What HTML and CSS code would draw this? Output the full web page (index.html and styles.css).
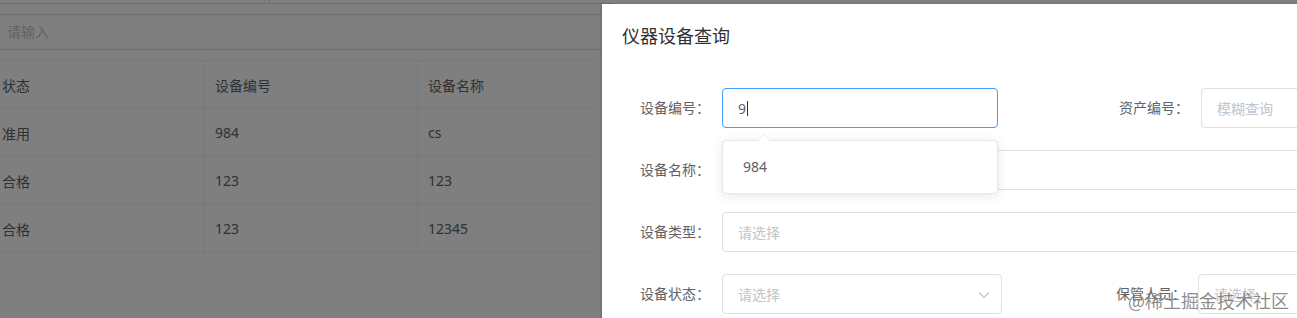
FILE: index.html
```html
<!DOCTYPE html>
<html lang="zh-CN">

<head>
    <meta charset="UTF-8">
    <meta name="viewport" content="width=device-width, initial-scale=1.0">
    <title>仪器设备查询</title>
    <link rel="stylesheet" href="styles.css">
</head>

<body>
    <!--底层页面-->
    <div class="page">
        <div class="topbar"><span class="topbar-tab"></span></div>
        <div class="search">
            <div class="search-input">请输入</div>
        </div>
        <table class="grid">
            <thead>
                <tr>
                    <th>状态</th>
                    <th>设备编号</th>
                    <th>设备名称</th>
                </tr>
            </thead>
            <tbody>
                <tr>
                    <td>准用</td>
                    <td>984</td>
                    <td>cs</td>
                </tr>
                <tr>
                    <td>合格</td>
                    <td>123</td>
                    <td>123</td>
                </tr>
                <tr>
                    <td>合格</td>
                    <td>123</td>
                    <td>12345</td>
                </tr>
            </tbody>
        </table>
    </div>

    <!--遮罩层-->
    <div class="mask"></div>

    <!--弹窗-->
    <div class="dialog">
        <div class="dialog-header">
            <span class="dialog-title">仪器设备查询</span>
        </div>
        <div class="dialog-body">
            <div class="form-row">
                <div class="form-item">
                    <label class="form-label">设备编号：</label>
                    <div class="form-control control-a">
                        <div class="input is-focus"><span class="input-value">9</span><span class="caret"></span></div>
                        <!--自动补全下拉-->
                        <div class="suggest">
                            <span class="suggest-arrow"></span>
                            <ul class="suggest-list">
                                <li>984</li>
                            </ul>
                        </div>
                    </div>
                </div>
                <div class="form-item item-asset">
                    <label class="form-label">资产编号：</label>
                    <div class="form-control control-wide">
                        <div class="input"><span class="placeholder">模糊查询</span></div>
                    </div>
                </div>
            </div>

            <div class="form-row">
                <div class="form-item item-full">
                    <label class="form-label">设备名称：</label>
                    <div class="form-control control-full">
                        <div class="input"></div>
                    </div>
                </div>
            </div>

            <div class="form-row">
                <div class="form-item item-full">
                    <label class="form-label">设备类型：</label>
                    <div class="form-control control-full">
                        <div class="input"><span class="placeholder">请选择</span></div>
                    </div>
                </div>
            </div>

            <div class="form-row">
                <div class="form-item">
                    <label class="form-label">设备状态：</label>
                    <div class="form-control control-b">
                        <div class="input select"><span class="placeholder">请选择</span>
                            <svg class="select-arrow" width="12" height="8" viewBox="0 0 12 8">
                                <path d="M1 1.5 L6 6.5 L11 1.5" fill="none" stroke="#c0c4cc" stroke-width="1.1"/>
                            </svg>
                        </div>
                    </div>
                </div>
                <div class="form-item item-keeper">
                    <label class="form-label">保管人员：</label>
                    <div class="form-control control-wide">
                        <div class="input"><span class="placeholder">请选择</span></div>
                    </div>
                </div>
            </div>
        </div>
    </div>

    <!--水印-->
    <div class="watermark">@稀土掘金技术社区</div>
</body>

</html>
```

FILE: styles.css
```css
* {
    margin: 0;
    padding: 0;
    box-sizing: border-box;
}

html,
body {
    width: 1297px;
    height: 318px;
    overflow: hidden;
}

body {
    position: relative;
    background-color: #fff;
    font-family: "Noto Sans", "Noto Sans CJK SC", sans-serif;
    font-size: 14px;
    color: #606266;
}

/*底层页面*/

.page {
    width: 620px;
    margin-left: -8px;
}

.topbar {
    height: 4px;
    border-bottom: 1px solid #dcdfe6;
}

.topbar-tab {
    display: block;
    width: 278px;
    height: 3px;
    border-right: 1px solid #dcdfe6;
}

.search {
    padding-top: 10px;
}

.search-input {
    height: 36px;
    line-height: 34px;
    border: 1px solid #dcdfe6;
    padding-left: 14px;
    color: #c0c4cc;
    font-size: 14px;
}

.grid {
    width: 600px;
    margin-top: 10px;
    border-collapse: separate;
    border-spacing: 0;
    border-top: 1px solid #ebeef5;
    table-layout: fixed;
}

.grid th,
.grid td {
    height: 48px;
    padding: 0 10px;
    text-align: left;
    font-weight: normal;
    color: #606266;
    border-bottom: 1px solid #ebeef5;
}

.grid th:nth-child(1),
.grid td:nth-child(1) {
    width: 213px;
}

.grid th:nth-child(2),
.grid td:nth-child(2) {
    width: 213px;
}

.grid th:nth-child(1),
.grid th:nth-child(2),
.grid td:nth-child(1),
.grid td:nth-child(2) {
    border-right: 1px solid #ebeef5;
}

.mask {
    position: absolute;
    left: 0;
    top: 0;
    right: 0;
    bottom: 0;
    background-color: rgba(0, 0, 0, 0.5);
}

/*弹窗*/

.dialog {
    position: absolute;
    left: 602px;
    top: 4px;
    width: 900px;
    height: 400px;
    background-color: #fff;
    box-shadow: 0 1px 3px rgba(0, 0, 0, 0.3);
}

.dialog-header {
    padding: 20px 20px 10px;
}

.dialog-title {
    font-size: 18px;
    line-height: 24px;
    color: #303133;
}

.dialog-body {
    padding: 30px 20px;
}

.form-row {
    display: flex;
    margin-bottom: 22px;
}

.form-item {
    display: flex;
}

.item-full {
    flex: 1;
}

.item-asset {
    margin-left: 103px;
}

.item-keeper {
    margin-left: 96px;
}

.form-label {
    width: 100px;
    padding-right: 12px;
    text-align: right;
    line-height: 40px;
    color: #606266;
}

.form-control {
    position: relative;
}

.control-a {
    width: 276px;
}

.control-b {
    width: 280px;
}

.control-wide {
    width: 300px;
}

.control-full {
    flex: 1;
}

.input {
    position: relative;
    display: flex;
    align-items: center;
    height: 40px;
    padding: 0 15px;
    border: 1px solid #dcdfe6;
    border-radius: 4px;
    background-color: #fff;
    color: #606266;
}

.input.is-focus {
    border-color: #409eff;
}

.caret {
    display: inline-block;
    width: 1px;
    height: 15px;
    margin-left: 1px;
    background-color: #303133;
}

.placeholder {
    color: #c0c4cc;
}

.select-arrow {
    position: absolute;
    right: 11px;
    top: 16px;
}

/*自动补全下拉*/

.suggest {
    position: absolute;
    left: 0;
    top: 52px;
    width: 276px;
    z-index: 2;
    background-color: #fff;
    border: 1px solid #e4e7ed;
    border-radius: 4px;
    box-shadow: 0 2px 12px rgba(0, 0, 0, 0.1);
}

.suggest-arrow {
    position: absolute;
    left: 35px;
    top: -6px;
    width: 0;
    height: 0;
    border-left: 6px solid transparent;
    border-right: 6px solid transparent;
    border-bottom: 6px solid #fff;
    filter: drop-shadow(0 -1px 0 #ebeef5);
}

.suggest-list {
    list-style: none;
    padding: 9px 0;
}

.suggest-list li {
    padding: 0 20px;
    line-height: 34px;
    color: #606266;
}

/*水印*/

.watermark {
    position: absolute;
    right: 8px;
    bottom: 6px;
    font-family: "Noto Sans CJK SC", sans-serif;
    font-size: 18px;
    line-height: 24px;
    color: rgba(120, 120, 120, 0.85);
    z-index: 5;
}
```
